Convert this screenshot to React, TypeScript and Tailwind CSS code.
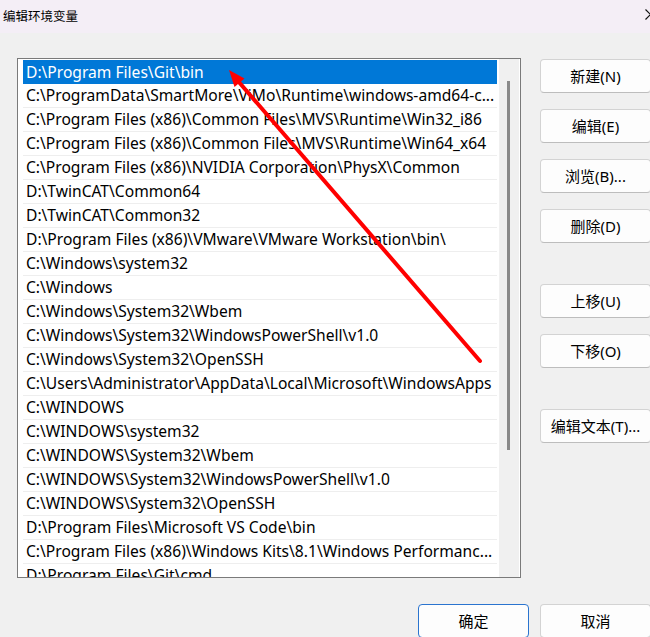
import React from 'react';

const paths = [
  'D:\\Program Files\\Git\\bin',
  'C:\\ProgramData\\SmartMore\\ViMo\\Runtime\\windows-amd64-c...',
  'C:\\Program Files (x86)\\Common Files\\MVS\\Runtime\\Win32_i86',
  'C:\\Program Files (x86)\\Common Files\\MVS\\Runtime\\Win64_x64',
  'C:\\Program Files (x86)\\NVIDIA Corporation\\PhysX\\Common',
  'D:\\TwinCAT\\Common64',
  'D:\\TwinCAT\\Common32',
  'D:\\Program Files (x86)\\VMware\\VMware Workstation\\bin\\',
  'C:\\Windows\\system32',
  'C:\\Windows',
  'C:\\Windows\\System32\\Wbem',
  'C:\\Windows\\System32\\WindowsPowerShell\\v1.0',
  'C:\\Windows\\System32\\OpenSSH',
  'C:\\Users\\Administrator\\AppData\\Local\\Microsoft\\WindowsApps',
  'C:\\WINDOWS',
  'C:\\WINDOWS\\system32',
  'C:\\WINDOWS\\System32\\Wbem',
  'C:\\WINDOWS\\System32\\WindowsPowerShell\\v1.0',
  'C:\\WINDOWS\\System32\\OpenSSH',
  'D:\\Program Files\\Microsoft VS Code\\bin',
  'C:\\Program Files (x86)\\Windows Kits\\8.1\\Windows Performanc...',
  'D:\\Program Files\\Git\\cmd',
];

const font = { fontFamily: '"Noto Sans", "Noto Sans CJK SC", sans-serif' };

function WinButton({ label, primary = false }: { label: string; primary?: boolean }) {
  return (
    <button
      className={`h-[34px] w-[111px] shrink-0 rounded-[4px] border bg-[#fdfdfd] text-[15px] text-black ${
        primary ? 'border-[#2a74cf]' : 'border-[#d3d3d3] border-b-[#bdbdbd]'
      }`}
    >
      {label}
    </button>
  );
}

export default function App() {
  return (
    <div
      className="relative w-[650px] h-[637px] overflow-hidden bg-[#f0f0f0] flex flex-col"
      style={font}
    >
      {/* Title bar */}
      <div className="h-[33px] shrink-0 bg-[#f4eef6] flex items-center pl-[3px]">
        <span className="text-[12.5px] text-black font-['Noto_Sans_CJK_SC',sans-serif]">编辑环境变量</span>
        <svg className="ml-auto mr-[-6px] mb-[4px]" width="11" height="11" viewBox="0 0 11 11">
          <path d="M0.5 0.5 L10.5 10.5 M10.5 0.5 L0.5 10.5" stroke="#111" strokeWidth="1.2" fill="none" />
        </svg>
      </div>

      {/* Body */}
      <div className="flex pt-[25px] pl-[17px] gap-[19px]">
        {/* List box */}
        <div className="w-[504px] h-[520px] shrink-0 border border-[#7a7a7a] bg-white flex overflow-hidden">
          <div className="w-[479px] pl-[5px] pt-[1px] flex flex-col shrink-0">
            {paths.map((p, i) => (
              <div
                key={i}
                className={`h-[24px] shrink-0 flex items-center pl-[3px] pt-[1px] whitespace-nowrap overflow-hidden text-[15.6px] leading-none ${
                  i === 0 ? 'bg-[#0078d7] text-white' : 'text-black border-b border-[#eeeeee]'
                }`}
              >
                {p}
              </div>
            ))}
          </div>
          {/* Scrollbar */}
          <div className="ml-[2px] w-[20px] h-[518px] bg-[#f0f0f0] flex justify-center pt-[22px] shrink-0">
            <div className="w-[3px] h-[369px] bg-[#8a8a8a] ml-[-1px]" />
          </div>
        </div>

        {/* Side buttons */}
        <div className="flex flex-col pt-[1px]">
          <WinButton label="新建(N)" />
          <div className="h-[16px]" />
          <WinButton label="编辑(E)" />
          <div className="h-[16px]" />
          <WinButton label="浏览(B)..." />
          <div className="h-[16px]" />
          <WinButton label="删除(D)" />
          <div className="h-[41px]" />
          <WinButton label="上移(U)" />
          <div className="h-[16px]" />
          <WinButton label="下移(O)" />
          <div className="h-[41px]" />
          <WinButton label="编辑文本(T)..." />
        </div>
      </div>

      {/* Bottom buttons */}
      <div className="flex gap-[11px] pl-[418px] pt-[26px]">
        <WinButton label="确定" primary />
        <WinButton label="取消" />
      </div>

      {/* Red annotation arrow */}
      <svg className="absolute left-0 top-0 pointer-events-none" width="650" height="637">
        <line x1="480" y1="361" x2="238" y2="81" stroke="#ff0000" strokeWidth="4" strokeLinecap="round" />
        <polygon points="229,70 244.5,78.5 234.5,87" fill="#ff0000" />
      </svg>
    </div>
  );
}
